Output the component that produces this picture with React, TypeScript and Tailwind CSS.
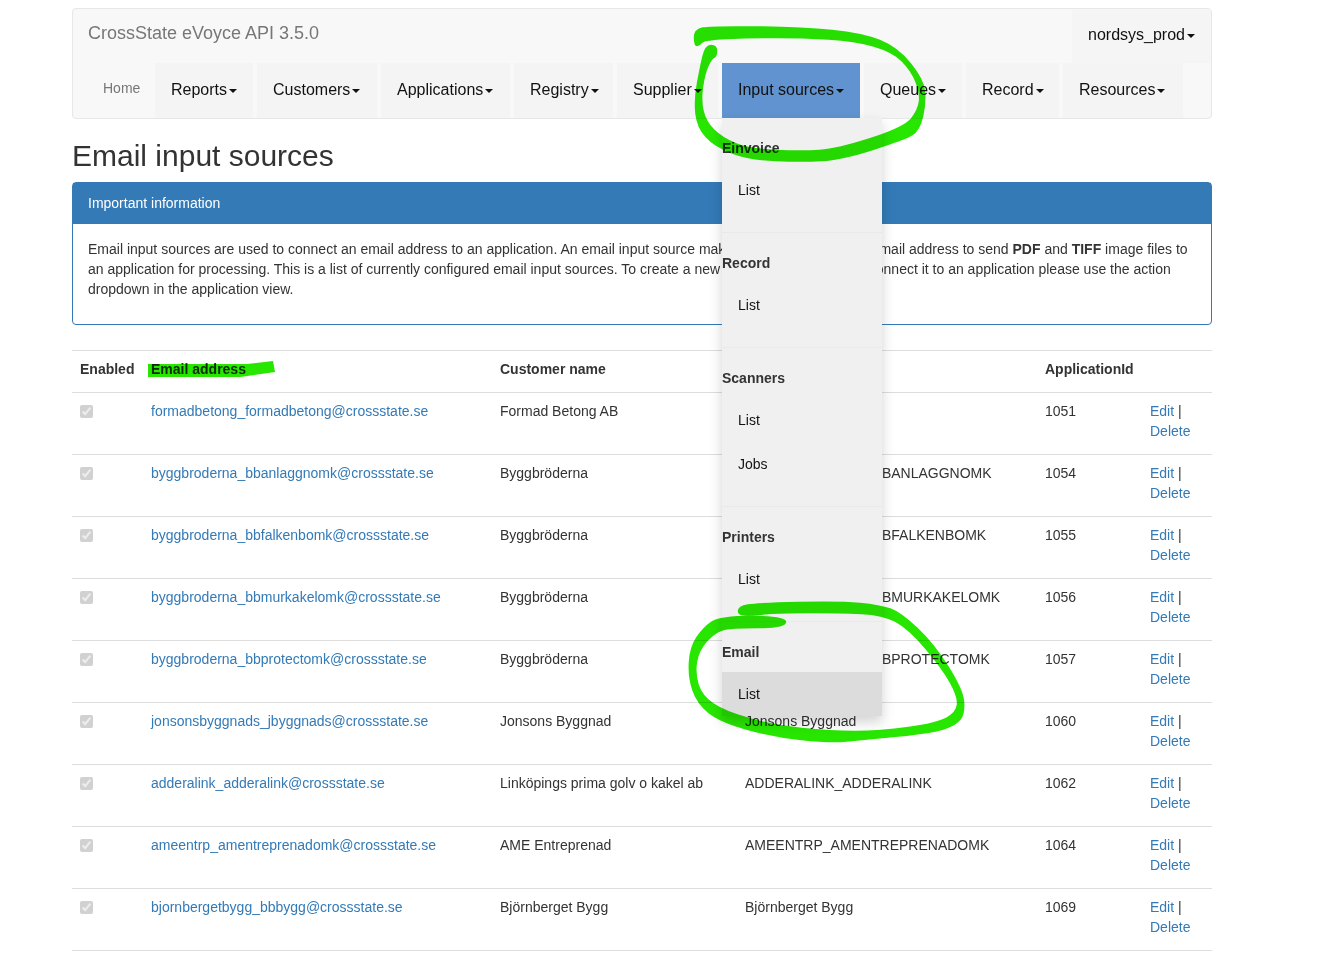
const navItems = [
  { label: "Reports", width: "w-[98px]" },
  { label: "Customers", width: "w-[120px]" },
  { label: "Applications", width: "w-[129px]" },
  { label: "Registry", width: "w-[99px]" },
  { label: "Supplier", width: "w-[101px]" },
];

const navItemsAfter = [
  { label: "Queues", width: "w-[98px]" },
  { label: "Record", width: "w-[93px]" },
  { label: "Resources", width: "w-[120px]" },
];

const menuSections = [
  { title: "Einvoice", items: ["List"] },
  { title: "Record", items: ["List"] },
  { title: "Scanners", items: ["List", "Jobs"] },
  { title: "Printers", items: ["List"] },
];

const rows = [
  { email: "formadbetong_formadbetong@crossstate.se", customer: "Formad Betong AB", name: "", id: 1051 },
  { email: "byggbroderna_bbanlaggnomk@crossstate.se", customer: "Byggbröderna", name: "BYGGBRODERNA_BBANLAGGNOMK", id: 1054 },
  { email: "byggbroderna_bbfalkenbomk@crossstate.se", customer: "Byggbröderna", name: "BYGGBRODERNA_BBFALKENBOMK", id: 1055 },
  { email: "byggbroderna_bbmurkakelomk@crossstate.se", customer: "Byggbröderna", name: "BYGGBRODERNA_BBMURKAKELOMK", id: 1056 },
  { email: "byggbroderna_bbprotectomk@crossstate.se", customer: "Byggbröderna", name: "BYGGBRODERNA_BBPROTECTOMK", id: 1057 },
  { email: "jonsonsbyggnads_jbyggnads@crossstate.se", customer: "Jonsons Byggnad", name: "Jonsons Byggnad", id: 1060 },
  { email: "adderalink_adderalink@crossstate.se", customer: "Linköpings prima golv o kakel ab", name: "ADDERALINK_ADDERALINK", id: 1062 },
  { email: "ameentrp_amentreprenadomk@crossstate.se", customer: "AME Entreprenad", name: "AMEENTRP_AMENTREPRENADOMK", id: 1064 },
  { email: "bjornbergetbygg_bbbygg@crossstate.se", customer: "Björnberget Bygg", name: "Björnberget Bygg", id: 1069 },
];

// outlines of the hand drawn marker strokes
const topCircle = [
  [695, 45], [695, 30], [711, 27], [802, 28], [862, 34], [897, 48], [923, 80], [925, 103], [919, 130], [904, 139],
  [841, 159], [802, 161], [750, 159], [715, 146], [698, 127], [695, 100], [701, 67], [706, 46], [716, 46], [716, 56],
  [711, 58], [704, 73], [700, 100], [705, 122], [722, 139], [750, 150], [802, 152], [837, 150], [905, 128], [919, 110],
  [921, 93], [912, 70], [893, 51], [855, 40], [802, 37], [750, 37], [704, 39], [699, 45],
];

const bottomCircle = [
  [739, 615], [739, 607], [757, 604], [840, 602], [880, 606], [900, 613], [933, 644], [962, 690], [964, 713], [956, 724],
  [933, 732], [863, 739], [830, 742], [773, 736], [720, 721], [698, 703], [689, 677], [691, 647], [704, 628], [720, 617],
  [785, 617], [785, 627], [730, 627], [714, 632], [698, 650], [694, 673], [701, 696], [724, 712], [773, 726], [830, 732],
  [880, 732], [937, 724], [957, 713], [959, 697], [943, 668], [909, 628], [883, 614], [840, 612], [780, 612], [757, 614],
];

const smoothPath = (points: number[][]) => {
  const mid = (a: number[], b: number[]) => `${(a[0] + b[0]) / 2} ${(a[1] + b[1]) / 2}`;
  let d = `M${mid(points[points.length - 1], points[0])}`;
  points.forEach((point, i) => {
    d += ` Q${point[0]} ${point[1]} ${mid(point, points[(i + 1) % points.length])}`;
  });
  return d + "Z";
};

const Caret = () => (
  <span className="ml-[2px] inline-block h-0 w-0 align-middle border-x-[4px] border-t-[4px] border-x-transparent border-t-[#111]" />
);

const InputSourcesMenu = () => (
  <div className="absolute left-0 top-full z-10 w-[160px] bg-[#f0f0f0] text-[14px] text-[#111] shadow-[0_6px_12px_rgba(0,0,0,0.175)]">
    {menuSections.map((section) => (
      <div key={section.title} className="border-b border-[#e9e9e9] pb-[20px]">
        <div className="h-[50px] pt-[20px] font-bold leading-[20px] text-[#333]">
          {section.title}
        </div>
        {section.items.map((item) => (
          <div key={item} className="h-[44px] pl-4 leading-[44px]">
            {item}
          </div>
        ))}
      </div>
    ))}
    <div className="h-[50px] pt-[20px] font-bold leading-[20px] text-[#333]">
      Email
    </div>
    <div className="h-[44px] bg-[#dcdcdc] pl-4 leading-[44px]">List</div>
  </div>
);

const Navbar = () => (
  <nav className="h-[111px] rounded-[4px] border border-[#e7e7e7] bg-[#f8f8f8]">
    <div className="flex h-[54px] justify-between">
      <div className="pl-[15px] pt-[11px] text-[18px] leading-[26px] text-[#777]">
        CrossState eVoyce API 3.5.0
      </div>
      <div className="h-[54px] w-[139px] bg-[#f5f5f5] pl-4 pt-[14px] text-[16px] leading-[24px] text-[#111]">
        nordsys_prod
        <Caret />
      </div>
    </div>
    <div className="flex h-[55px] pl-[15px] text-[16px] text-[#111]">
      <div className="w-[67px] pl-[15px] text-[14px] leading-[50px] text-[#777]">
        Home
      </div>
      <div className="flex gap-1">
        {navItems.map((item) => (
          <div key={item.label} className={`${item.width} bg-[#f4f4f4] pl-4 leading-[53px]`}>
            {item.label}
            <Caret />
          </div>
        ))}
        <div className="relative w-[138px] bg-[#6093cf] pl-4 leading-[53px]">
          Input sources
          <Caret />
          <InputSourcesMenu />
        </div>
        {navItemsAfter.map((item) => (
          <div key={item.label} className={`${item.width} bg-[#f4f4f4] pl-4 leading-[53px]`}>
            {item.label}
            <Caret />
          </div>
        ))}
      </div>
    </div>
  </nav>
);

const InfoPanel = () => (
  <section className="h-[143px] rounded-[4px] border border-[#337ab7]">
    <div className="flex h-[41px] items-center bg-[#337ab7] px-[15px] text-white">
      Important information
    </div>
    <p className="whitespace-nowrap px-[15px] pt-[15px] leading-[20px]">
      Email input sources are used to connect an email address to an application. An email input source makes it possible to use an email address to send <b>PDF</b> and <b>TIFF</b> image files to
      <br />
      an application for processing. This is a list of currently configured email input sources. To create a new email input source and connect it to an application please use the action
      <br />
      dropdown in the application view.
    </p>
  </section>
);

const EmailTable = () => (
  <table className="mt-[25px] w-full table-fixed border-collapse border-t border-[#ddd] text-left">
    <colgroup>
      <col className="w-[71px]" />
      <col className="w-[349px]" />
      <col className="w-[245px]" />
      <col className="w-[300px]" />
      <col className="w-[105px]" />
      <col />
    </colgroup>
    <thead>
      <tr className="h-[42px] border-b border-[#ddd]">
        <th className="px-2 pb-1">Enabled</th>
        <th className="px-2 pb-1">Email address</th>
        <th className="px-2 pb-1">Customer name</th>
        <th className="px-2 pb-1"></th>
        <th className="px-2 pb-1">ApplicationId</th>
        <th></th>
      </tr>
    </thead>
    <tbody>
      {rows.map((row) => (
        <tr key={row.id} className="h-[62px] border-b border-[#ddd] align-top">
          <td className="px-2 pt-[8px]">
            <input type="checkbox" checked disabled readOnly className="mt-[4px] block" />
          </td>
          <td className="px-2 pt-[8px] leading-[20px] text-[#337ab7]">{row.email}</td>
          <td className="whitespace-nowrap px-2 pt-[8px] leading-[20px]">{row.customer}</td>
          <td className="whitespace-nowrap px-2 pt-[8px] leading-[20px]">{row.name}</td>
          <td className="px-2 pt-[8px] leading-[20px]">{row.id}</td>
          <td className="px-2 pt-[8px] leading-[20px] text-[#337ab7]">
            Edit <span className="text-[#333]">|</span>
            <br />
            Delete
          </td>
        </tr>
      ))}
    </tbody>
  </table>
);

const Scribbles = () => (
  <svg
    className="pointer-events-none absolute left-0 top-0 z-20 mix-blend-multiply"
    width="1339"
    height="957"
    viewBox="0 0 1339 957"
    fill="#27e600"
    stroke="#27e600"
    strokeWidth="2.5"
  >
    <path d={smoothPath(topCircle)} />
    <path d={smoothPath(bottomCircle)} />
    <polygon points="148,364 247,364 273,361 275,372 240,377 148,377" strokeWidth="0" />
  </svg>
);

export default function App() {
  return (
    <div className="relative min-h-[957px] bg-white font-['Liberation_Sans',Arial,sans-serif] text-[14px] text-[#333]">
      <div className="ml-[72px] w-[1140px] pt-[8px]">
        <Navbar />
        <h1 className="mb-[10px] flex h-[53px] items-end text-[30px] font-normal leading-[33px]">
          Email input sources
        </h1>
        <InfoPanel />
        <EmailTable />
      </div>
      <Scribbles />
    </div>
  );
}
